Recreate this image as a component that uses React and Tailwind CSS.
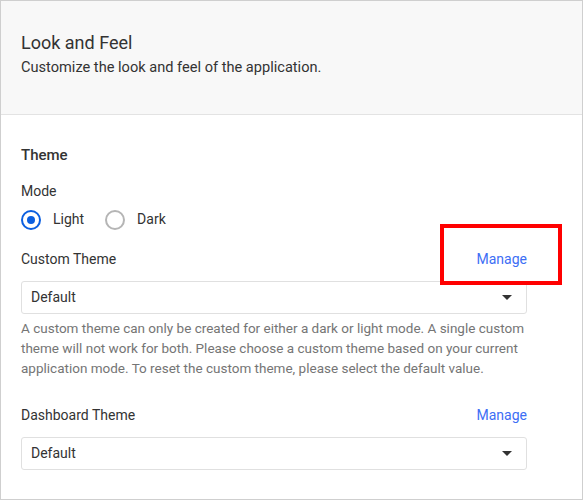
import React from "react";

const Caret = () => (
  <svg width="10" height="5" viewBox="0 0 10 5" className="text-[#333]">
    <path d="M0 0h10L5 5z" fill="currentColor" />
  </svg>
);

const Select = ({ value }) => (
  <div className="flex h-[33px] items-center justify-between rounded-[3px] border border-[#e0e0e0] bg-white pl-[9px] pr-[14px] text-[14px] text-[#333]">
    <span>{value}</span>
    <Caret />
  </div>
);

const Radio = ({ label, checked }) => (
  <label className="flex items-center gap-3">
    {checked ? (
      <span className="flex h-5 w-5 items-center justify-center rounded-full border-2 border-[#0b5fe0]">
        <span className="h-2 w-2 rounded-full bg-[#0b5fe0]" />
      </span>
    ) : (
      <span className="h-5 w-5 rounded-full border-2 border-[#b5b5b5]" />
    )}
    <span className="text-[14px] text-[#333]">{label}</span>
  </label>
);

const App = () => {
  return (
    <div
      className="relative h-[500px] w-[583px] border border-[#cfcfcf] bg-white"
      style={{ fontFamily: "Roboto, 'Liberation Sans', sans-serif" }}
    >
      <header className="h-[114px] border-b border-[#e3e3e3] bg-[#f8f8f8] pl-5 pt-[30px]">
        <h1 className="text-[18px] leading-6 text-[#333]">Look and Feel</h1>
        <p className="mt-[2px] text-[14.6px] leading-5 text-[#333]">
          Customize the look and feel of the application.
        </p>
      </header>

      <section className="w-[526px] pl-5 pt-[30px]">
        <h2 className="text-[15px] font-medium leading-5 text-[#333]">Theme</h2>
        <p className="mt-4 text-[14px] leading-5 text-[#333]">Mode</p>
        <div className="mt-2 flex items-center gap-[21px]">
          <Radio label="Light" checked />
          <Radio label="Dark" />
        </div>

        <div className="mt-[19px] flex items-center justify-between text-[14px] leading-5">
          <span className="text-[#333]">Custom Theme</span>
          <a className="text-[#3d6ef5]">Manage</a>
        </div>
        <div className="mt-3">
          <Select value="Default" />
        </div>
        <p className="mt-1 text-[13.5px] leading-5 text-[#757575]">
          A custom theme can only be created for either a dark or light mode. A single custom
          theme will not work for both. Please choose a custom theme based on your current
          application mode. To reset the custom theme, please select the default value.
        </p>

        <div className="mt-[27px] flex items-center justify-between text-[14px] leading-5">
          <span className="text-[#333]">Dashboard Theme</span>
          <a className="text-[#3d6ef5]">Manage</a>
        </div>
        <div className="mt-3">
          <Select value="Default" />
        </div>
      </section>

      <div className="absolute left-[439px] top-[223px] h-[61px] w-[122px] border-4 border-[#ff0000]" />
    </div>
  );
};

export default App;
